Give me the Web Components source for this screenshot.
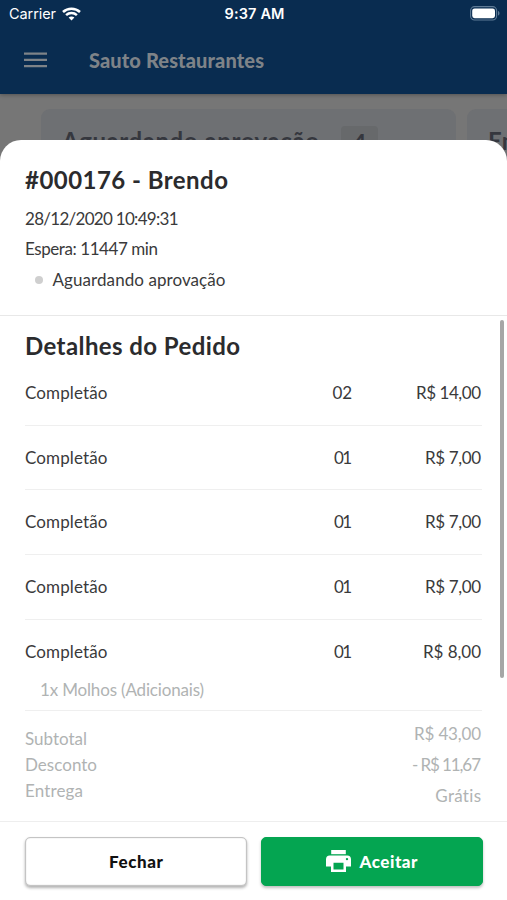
<!DOCTYPE html>
<html lang="pt-BR">
<head>
<meta charset="utf-8">
<title>Sauto Restaurantes</title>
<style>
  body {
    margin: 0;
    width: 507px;
    height: 900px;
    overflow: hidden;
    font-family: "Lato", sans-serif;
    font-size: 17px;
    color: #3a3a3b;
  }
</style>
</head>
<body>
<orders-app></orders-app>

<script>
// Text with its letters tracked to a given width
class FitText extends HTMLElement {
  constructor() {
    super();
    this.attachShadow({ mode: "open" });
    this.shadowRoot.innerHTML = `
      <style>
        :host { display: block; flex: none; white-space: nowrap; }
        span { display: inline-block; }
      </style>
      <span><slot></slot></span>`;
  }

  connectedCallback() {
    const span = this.shadowRoot.querySelector("span");
    const width = Number(this.getAttribute("width"));
    const count = this.textContent.length;
    if (width && count > 1) {
      const gap = (width - span.getBoundingClientRect().width) / (count - 1);
      span.style.letterSpacing = gap + "px";
      span.style.marginRight = -gap + "px";
    }
  }
}

class StatusBar extends HTMLElement {
  constructor() {
    super();
    this.attachShadow({ mode: "open" });
    this.shadowRoot.innerHTML = `
      <style>
        :host {
          display: grid;
          grid-template-columns: 1fr auto 1fr;
          align-items: center;
          height: 27px;
          padding: 0 7px 0 9px;
          font-family: "Inter", sans-serif;
          font-size: 14.5px;
          color: #fff;
        }
        .left { display: flex; align-items: center; gap: 6px; }
        .time { font-weight: 600; }
        .battery { justify-self: end; }
        svg { display: block; }
      </style>
      <div class="left">
        <fit-text width="47">Carrier</fit-text>
        <svg width="19" height="14" viewBox="0 0 19 14" fill="none" stroke="#fff" stroke-width="2.5">
          <path d="M1 5C5.7.5 13.3.5 18 5"/>
          <path d="M4.1 8.1C7.1 5.3 11.9 5.3 14.9 8.1"/>
          <path d="M6.6 10.6C8.2 9 10.8 9 12.4 10.6L9.5 13.6Z" fill="#fff" stroke="none"/>
        </svg>
      </div>
      <fit-text class="time" width="60">9:37 AM</fit-text>
      <svg class="battery" width="30" height="15" viewBox="0 0 30 15">
        <rect x=".6" y=".6" width="26" height="13.4" rx="4" fill="none" stroke="#5f7b96" stroke-width="1.1"/>
        <rect x="2.2" y="2.4" width="22.8" height="9.8" rx="2.4" fill="#fff"/>
        <path d="M28 5v4.6c2-.7 2-3.9 0-4.6z" fill="#5f7b96"/>
      </svg>`;
  }
}

class AppHeader extends HTMLElement {
  constructor() {
    super();
    this.attachShadow({ mode: "open" });
    this.shadowRoot.innerHTML = `
      <style>
        :host {
          display: block;
          position: relative;
          height: 94px;
          background: #092c50;
          box-shadow: 0 1px 4px rgba(0, 0, 0, .3);
        }
        .bar {
          display: flex;
          align-items: center;
          height: 65px;
          padding-left: 24px;
          gap: 42px;
          color: #7e8388;
        }
        fit-text {
          font-size: 20px;
          font-weight: 900;
        }
      </style>
      <status-bar></status-bar>
      <div class="bar">
        <svg width="23" height="16" viewBox="0 0 23 16" fill="#7e8388">
          <path d="M0 .5h23v2.300H0zM0 6.800h23v2.300H0zM0 13h23v2.300H0z"/>
        </svg>
        <fit-text width="175">Sauto Restaurantes</fit-text>
      </div>`;
  }
}

class OrderColumn extends HTMLElement {
  constructor() {
    super();
    this.attachShadow({ mode: "open" });
    this.shadowRoot.innerHTML = `
      <style>
        :host {
          display: flex;
          flex: none;
          box-sizing: border-box;
          width: 415px;
          height: 120px;
          padding: 17px 21px;
          gap: 22px;
          border-radius: 9px;
          background: #6e7073;
          color: #35373e;
          font-size: 24px;
          line-height: 30px;
          font-weight: 700;
        }
        .count {
          width: 37px;
          height: 34px;
          border-radius: 4px;
          background: #67696b;
          line-height: 34px;
          text-align: center;
        }
      </style>
      <slot></slot>
      ${this.hasAttribute("count") ? `<div class="count">${this.getAttribute("count")}</div>` : ""}`;
  }
}

class OrderItem extends HTMLElement {
  constructor() {
    super();
    this.attachShadow({ mode: "open" });
    const attr = (name) => this.getAttribute(name);
    this.shadowRoot.innerHTML = `
      <style>
        :host {
          display: block;
          box-sizing: border-box;
          height: 64.7px;
          border-bottom: 1px solid #efefef;
        }
        :host([extra]) { height: 91px; }
        .row {
          display: grid;
          grid-template-columns: 1fr auto 130px;
          height: 64px;
          line-height: 64px;
        }
        .price { justify-self: end; padding-right: 1px; }
        .extra {
          margin: -4px 0 0 15px;
          line-height: 20px;
          color: #b0b3b3;
        }
      </style>
      <div class="row">
        <fit-text width="82.500">${attr("name")}</fit-text>
        <fit-text width="${attr("qty") === "01" ? 18 : 19.5}">${attr("qty")}</fit-text>
        <fit-text class="price" width="${attr("price-width")}">${attr("price")}</fit-text>
      </div>
      ${attr("extra") ? `<fit-text class="extra" width="164">${attr("extra")}</fit-text>` : ""}`;
  }
}

class OrderTotals extends HTMLElement {
  constructor() {
    super();
    this.attachShadow({ mode: "open" });
    this.shadowRoot.innerHTML = `
      <style>
        :host {
          display: flex;
          justify-content: space-between;
          height: 109px;
          padding-right: 1px;
          color: #b0b3b3;
        }
        .labels { padding-top: 15.5px; line-height: 25.8px; }
        .values {
          display: flex;
          flex-direction: column;
          align-items: flex-end;
          padding-top: 8.5px;
          line-height: 30.7px;
        }
      </style>
      <div class="labels">
        <fit-text width="62">Subtotal</fit-text>
        <fit-text width="72">Desconto</fit-text>
        <fit-text width="58">Entrega</fit-text>
      </div>
      <div class="values">
        <fit-text width="67">R$ 43,00</fit-text>
        <fit-text width="69">- R$ 11,67</fit-text>
        <fit-text width="46">Grátis</fit-text>
      </div>`;
  }
}

class AppButton extends HTMLElement {
  constructor() {
    super();
    this.attachShadow({ mode: "open" });
    this.shadowRoot.innerHTML = `
      <style>
        :host { display: block; flex: 1; }
        button {
          display: flex;
          align-items: center;
          justify-content: center;
          gap: 8px;
          box-sizing: border-box;
          width: 100%;
          height: 49px;
          padding: 0 0 1px;
          border: 1px solid #c4c4c4;
          border-radius: 5px;
          background: #fff;
          box-shadow: inset 0 0 1px #aaa, 0 2px 3px rgba(0, 0, 0, .3);
          font: inherit;
          font-weight: 900;
          color: #111;
        }
        :host([primary]) button {
          border-color: #04a551;
          background: #04a551;
          box-shadow: 0 2px 3px rgba(0, 0, 0, .25);
          color: #fff;
        }
      </style>
      <button><slot name="icon"></slot><slot></slot></button>`;
  }
}

class OrderSheet extends HTMLElement {
  constructor() {
    super();
    this.attachShadow({ mode: "open" });
    this.shadowRoot.innerHTML = `
      <style>
        :host {
          display: flex;
          flex-direction: column;
          position: absolute;
          left: 0;
          right: 0;
          top: 140px;
          bottom: 0;
          border-radius: 21px 21px 0 0;
          background: #fff;
        }
        header {
          box-sizing: border-box;
          height: 176px;
          padding: 24px 25px 0;
          border-bottom: 1px solid #e8e8e8;
          line-height: 30.5px;
        }
        h1, h2 {
          margin: 0;
          font-size: 24px;
          font-weight: 700;
          line-height: 32px;
          color: #2b2b2d;
        }
        h1 { margin-bottom: 7.5px; }
        h2 { padding-top: 13.5px; }
        .status { display: flex; align-items: center; }
        .dot {
          width: 8px;
          height: 8px;
          margin: 0 10px 0 9.5px;
          border-radius: 50%;
          background: #cfcfcf;
        }
        main {
          position: relative;
          box-sizing: border-box;
          height: 505px;
          padding: 0 25px;
        }
        .thumb {
          position: absolute;
          top: 4px;
          right: 3.5px;
          width: 4px;
          height: 358px;
          border-radius: 2px;
          background: #a6a6a6;
        }
        .items { margin-top: -.6px; }
        footer {
          display: flex;
          gap: 14px;
          box-sizing: border-box;
          flex: 1;
          padding: 15px 24px 0 25px;
          border-top: 1px solid #eee;
        }
      </style>
      <header>
        <h1><fit-text width="203">#000176 - Brendo</fit-text></h1>
        <fit-text width="153.500">28/12/2020 10:49:31</fit-text>
        <fit-text width="133">Espera: 11447 min</fit-text>
        <div class="status">
          <span class="dot"></span>
          <fit-text width="173">Aguardando aprovação</fit-text>
        </div>
      </header>
      <main>
        <h2><fit-text width="215">Detalhes do Pedido</fit-text></h2>
        <div class="items">
          <order-item name="Completão" qty="02" price="R$ 14,00" price-width="65"></order-item>
          <order-item name="Completão" qty="01" price="R$ 7,00" price-width="56"></order-item>
          <order-item name="Completão" qty="01" price="R$ 7,00" price-width="56"></order-item>
          <order-item name="Completão" qty="01" price="R$ 7,00" price-width="56"></order-item>
          <order-item name="Completão" qty="01" price="R$ 8,00" price-width="58" extra="1x Molhos (Adicionais)"></order-item>
        </div>
        <order-totals></order-totals>
        <div class="thumb"></div>
      </main>
      <footer>
        <app-button><fit-text width="54">Fechar</fit-text></app-button>
        <app-button primary>
          <svg slot="icon" width="25" height="22" viewBox="0 0 25 22" fill="#fff">
            <path d="M5.200 0h14.600v4.200H5.200z"/>
            <path fill-rule="evenodd" d="M3.800 5.500h17.400A3.800 3.800 0 0 1 25 9.300v7.200h-5V22H5v-5.500H0V9.300A3.800 3.800 0 0 1 3.800 5.500zM7.500 12.700v6.800h10v-6.800zM21 7.900a1.200 1.200 0 1 0 0 2.400 1.200 1.200 0 0 0 0-2.400z"/>
          </svg>
          <fit-text width="58">Aceitar</fit-text>
        </app-button>
      </footer>`;
  }
}

class OrdersApp extends HTMLElement {
  constructor() {
    super();
    this.attachShadow({ mode: "open" });
    this.shadowRoot.innerHTML = `
      <style>
        :host {
          display: block;
          position: relative;
          height: 900px;
          overflow: hidden;
          background: #767676;
        }
        .board {
          display: flex;
          gap: 11px;
          padding: 15px 0 0 41px;
        }
      </style>
      <app-header></app-header>
      <div class="board">
        <order-column count="4"><fit-text width="257">Aguardando aprovação</fit-text></order-column>
        <order-column><fit-text width="125">Em preparo</fit-text></order-column>
      </div>
      <order-sheet></order-sheet>`;
  }
}

customElements.define("fit-text", FitText);
customElements.define("status-bar", StatusBar);
customElements.define("app-header", AppHeader);
customElements.define("order-column", OrderColumn);
customElements.define("order-item", OrderItem);
customElements.define("order-totals", OrderTotals);
customElements.define("app-button", AppButton);
customElements.define("order-sheet", OrderSheet);
customElements.define("orders-app", OrdersApp);
</script>
</body>
</html>
